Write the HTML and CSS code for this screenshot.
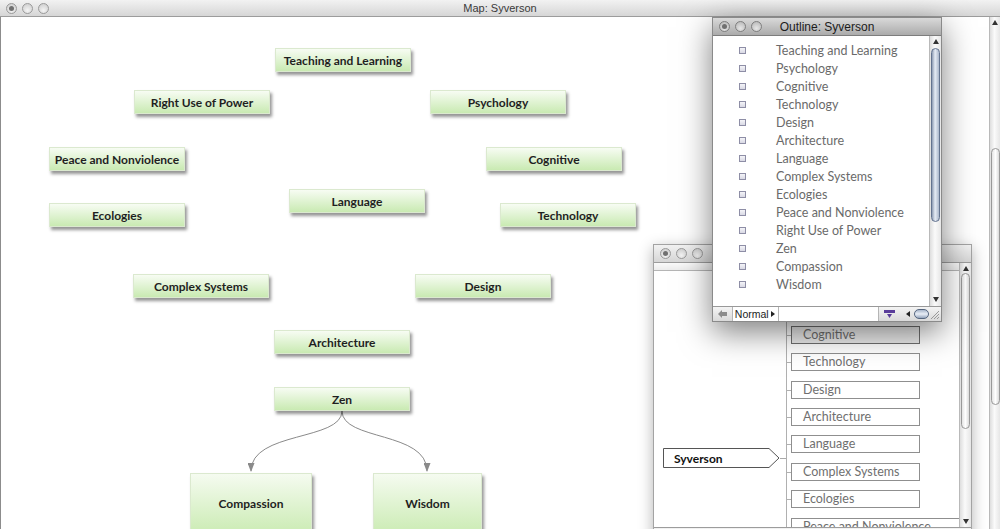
FILE: index.html
```html
<!DOCTYPE html>
<html lang="en">
<head>
    <meta charset="UTF-8">
    <title>Map: Syverson</title>
    <link rel="stylesheet" href="styles.css">
</head>
<body>
<div class="desktop">

    <!-- map window -->
    <div class="window map-window">
        <div class="titlebar">
            <div class="lights">
                <span class="light dirty"></span><span class="light"></span><span class="light"></span>
            </div>
            <div class="title">Map: Syverson</div>
            <div></div>
        </div>
        <div class="map-body">
            <div class="canvas">
                <svg class="links" width="700" height="512">
                    <defs>
                        <marker id="head" markerWidth="9" markerHeight="7" refX="8" refY="3.5" orient="auto" markerUnits="userSpaceOnUse">
                            <path class="head" d="M0,0 L9,3.5 L0,7 Z"/>
                        </marker>
                    </defs>
                    <path class="link" d="M341,394 C341,424 250,414 250,454" marker-end="url(#head)"/>
                    <path class="link" d="M341,394 C341,424 426,414 426,454" marker-end="url(#head)"/>
                </svg>
                <div class="node n-teaching">Teaching and Learning</div>
                <div class="node n-power">Right Use of Power</div>
                <div class="node n-psych">Psychology</div>
                <div class="node n-peace">Peace and Nonviolence</div>
                <div class="node n-cognitive">Cognitive</div>
                <div class="node n-language">Language</div>
                <div class="node n-ecologies">Ecologies</div>
                <div class="node n-technology">Technology</div>
                <div class="node n-complex">Complex Systems</div>
                <div class="node n-design">Design</div>
                <div class="node n-architecture">Architecture</div>
                <div class="node n-zen">Zen</div>
                <div class="node big n-compassion">Compassion</div>
                <div class="node big n-wisdom">Wisdom</div>
            </div>
            <div class="vscroll main-scroll">
                <span class="tri-up"></span>
                <div class="thumb"></div>
            </div>
        </div>
    </div>

    <!-- tree window (behind) -->
    <div class="window tree-window">
        <div class="titlebar">
            <div class="lights">
                <span class="light dirty"></span><span class="light"></span><span class="light"></span>
            </div>
            <div class="title"></div>
            <div></div>
        </div>
        <div class="tree-body">
            <div class="tree-main">
                <div class="ruler"></div>
                <div class="tree">
                    <div class="root">
                        <svg class="root-shape" width="117" height="20">
                            <polygon points="0.5,0.5 106,0.5 116,10 106,19.5 0.5,19.5" fill="#fff" stroke="#555"/>
                        </svg>
                        <span class="root-label">Syverson</span>
                    </div>
                    <div class="root-link"></div>
                    <div class="branch">
                        <div class="leaf hidden">Teaching and Learning</div>
                        <div class="leaf hidden">Psychology</div>
                        <div class="leaf selected">Cognitive</div>
                        <div class="leaf">Technology</div>
                        <div class="leaf">Design</div>
                        <div class="leaf">Architecture</div>
                        <div class="leaf">Language</div>
                        <div class="leaf">Complex Systems</div>
                        <div class="leaf">Ecologies</div>
                        <div class="leaf wide">Peace and Nonviolence</div>
                        <div class="leaf">Right Use of Power</div>
                        <div class="leaf">Zen</div>
                        <div class="leaf">Compassion</div>
                        <div class="leaf">Wisdom</div>
                    </div>
                </div>
            </div>
            <div class="vscroll tree-scroll">
                <span class="tri-up"></span>
                <div class="thumb"></div>
                <div class="spacer"></div>
                <span class="tri-down"></span>
            </div>
        </div>
        <div class="tree-foot"></div>
    </div>

    <!-- outline window (front) -->
    <div class="window outline-window">
        <div class="titlebar dark">
            <div class="lights">
                <span class="light dirty"></span><span class="light"></span><span class="light"></span>
            </div>
            <div class="title">Outline: Syverson</div>
            <div></div>
        </div>
        <div class="outline-body">
            <ul class="outline-list">
                <li><span class="bullet"></span>Teaching and Learning</li>
                <li><span class="bullet"></span>Psychology</li>
                <li><span class="bullet"></span>Cognitive</li>
                <li><span class="bullet"></span>Technology</li>
                <li><span class="bullet"></span>Design</li>
                <li><span class="bullet"></span>Architecture</li>
                <li><span class="bullet"></span>Language</li>
                <li><span class="bullet"></span>Complex Systems</li>
                <li><span class="bullet"></span>Ecologies</li>
                <li><span class="bullet"></span>Peace and Nonviolence</li>
                <li><span class="bullet"></span>Right Use of Power</li>
                <li><span class="bullet"></span>Zen</li>
                <li><span class="bullet"></span>Compassion</li>
                <li><span class="bullet"></span>Wisdom</li>
            </ul>
            <div class="vscroll outline-scroll">
                <span class="tri-up"></span>
                <div class="thumb aqua"></div>
                <div class="spacer"></div>
                <span class="tri-down"></span>
            </div>
        </div>
        <div class="outline-foot">
            <div class="foot-back">
                <svg width="9" height="8"><path d="M0,4 L4,0 L4,2 L9,2 L9,6 L4,6 L4,8 Z" fill="#8c8c8c"/></svg>
            </div>
            <div class="style-field"><span>Normal</span><span class="tri-right"></span></div>
            <div class="text-field"></div>
            <div class="foot-icon">
                <svg width="11" height="9"><rect x="0" y="0" width="11" height="3" fill="#5a3d9a"/><path d="M3,4 L8,4 L5.5,8 Z" fill="#5a3d9a"/></svg>
            </div>
            <span class="tri-left"></span>
            <div class="hthumb"></div>
            <div class="grip">
                <svg width="11" height="11"><path d="M10,2 L2,10 M10,5 L5,10 M10,8 L8,10" stroke="#999" stroke-width="1"/></svg>
            </div>
        </div>
    </div>

</div>
</body>
</html>
```

FILE: styles.css
```css
body {
    margin: 0;
    background: #fff;
    overflow: hidden;
}

.desktop {
    position: relative;
    width: 1000px;
    height: 529px;
    overflow: hidden;
    font-family: 'Liberation Sans', Arial, sans-serif;
}

.window {
    position: absolute;
    display: flex;
    flex-direction: column;
    background: #fff;
    box-sizing: border-box;
}

/* title bars */
.titlebar {
    display: grid;
    grid-template-columns: 1fr auto 1fr;
    align-items: center;
    height: 18px;
    box-sizing: border-box;
    border-bottom: 1px solid #9c9c9c;
    background: linear-gradient(#f2f2f2, #d6d6d6);
    flex-shrink: 0;
}

.titlebar.dark {
    background: linear-gradient(#d9d9d9, #ababab);
    border-bottom-color: #7d7d7d;
}

.lights {
    display: flex;
    gap: 5px;
    padding-left: 6px;
}

.light {
    width: 11px;
    height: 11px;
    box-sizing: border-box;
    border-radius: 50%;
    border: 1px solid #9a9a9a;
    background: radial-gradient(circle at 50% 70%, #f4f4f4, #c9c9c9);
    display: flex;
    align-items: center;
    justify-content: center;
}

.titlebar.dark .light {
    border-color: #7f7f7f;
    background: radial-gradient(circle at 50% 70%, #e6e6e6, #b3b3b3);
}

.light.dirty::after {
    content: "";
    width: 5px;
    height: 5px;
    border-radius: 50%;
    background: #707070;
}

.title {
    font-size: 11px;
    color: #3a3a3a;
    white-space: nowrap;
}

.titlebar.dark .title {
    font-size: 12px;
    color: #1c1c1c;
}

/* scroll bars */
.vscroll {
    width: 12px;
    flex-shrink: 0;
    box-sizing: border-box;
    border-left: 1px solid #b9b9b9;
    background: linear-gradient(to right, #dedede, #fafafa 45%, #e6e6e6);
    display: flex;
    flex-direction: column;
    align-items: center;
}

.vscroll .thumb {
    width: 9px;
    box-sizing: border-box;
    border: 1px solid #999;
    border-radius: 5px;
    background: linear-gradient(to right, #e4e4e4, #ffffff 50%, #dadada);
}

.vscroll .thumb.aqua {
    border-color: #63738f;
    background: linear-gradient(to right, #8d9bb3, #e6ecf5 45%, #aab6ca);
}

.vscroll .spacer {
    flex: 1;
}

.tri-up {
    width: 0;
    height: 0;
    border-left: 3px solid transparent;
    border-right: 3px solid transparent;
    border-bottom: 5px solid #333;
}

.tri-down {
    width: 0;
    height: 0;
    border-left: 3px solid transparent;
    border-right: 3px solid transparent;
    border-top: 5px solid #333;
}

.tri-right {
    width: 0;
    height: 0;
    border-top: 3px solid transparent;
    border-bottom: 3px solid transparent;
    border-left: 4px solid #222;
}

.tri-left {
    width: 0;
    height: 0;
    border-top: 3px solid transparent;
    border-bottom: 3px solid transparent;
    border-right: 4px solid #222;
}

/* map window */
.map-window {
    left: 0;
    top: 0;
    width: 1000px;
    height: 529px;
}

.map-window .titlebar {
    height: 17px;
}

.map-body {
    flex: 1;
    display: flex;
    min-height: 0;
}

.canvas {
    flex: 1;
    position: relative;
    overflow: hidden;
    border-left: 1px solid #8c8c8c;
}

.links {
    position: absolute;
    left: 0;
    top: 0;
}

.links .link {
    fill: none;
    stroke: #8a8a8a;
    stroke-width: 1;
}

.links .head {
    fill: #8a8a8a;
    stroke: none;
}

.main-scroll {
    width: 11px;
    padding-top: 3px;
}

.main-scroll .thumb {
    margin-top: 123px;
    height: 257px;
}

.node {
    position: absolute;
    width: 136px;
    height: 24px;
    box-sizing: border-box;
    display: flex;
    align-items: center;
    justify-content: center;
    font-family: Lato, 'Liberation Sans', sans-serif;
    font-weight: bold;
    font-size: 12px;
    color: #1f1f1f;
    background: linear-gradient(#f7fcf3, #c9eab2);
    border: 1px solid #dbe9cf;
    box-shadow: 2px 3px 3px rgba(0, 0, 0, 0.42);
    white-space: nowrap;
}

.node.big {
    height: 74px;
    align-items: flex-start;
    padding-top: 22px;
    background: linear-gradient(#f5fbf0, #cfedb9 75%);
}

.n-teaching     { left: 274px; top: 31px; }
.n-power        { left: 133px; top: 73px; }
.n-psych        { left: 429px; top: 73px; }
.n-peace        { left: 48px;  top: 130px; }
.n-cognitive    { left: 485px; top: 130px; }
.n-language     { left: 288px; top: 172px; }
.n-ecologies    { left: 48px;  top: 186px; }
.n-technology   { left: 499px; top: 186px; }
.n-complex      { left: 132px; top: 257px; }
.n-design       { left: 414px; top: 257px; }
.n-architecture { left: 273px; top: 313px; }
.n-zen          { left: 273px; top: 370px; }
.n-compassion   { left: 189px; top: 456px; width: 122px; }
.n-wisdom       { left: 372px; top: 456px; width: 109px; }

/* tree window */
.tree-window {
    left: 653px;
    top: 244px;
    width: 319px;
    height: 299px;
    border: 1px solid #a3a3a3;
    box-shadow: 0 4px 14px rgba(0, 0, 0, 0.3);
}

.tree-body {
    height: 264px;
    display: flex;
    flex-shrink: 0;
}

.tree-main {
    flex: 1;
    min-width: 0;
    overflow: hidden;
}

.ruler {
    height: 8px;
    box-sizing: border-box;
    border-bottom: 1px solid #b5b5b5;
    background: linear-gradient(#fafafa, #ececec);
}

.tree {
    display: flex;
    align-items: center;
    padding-left: 9px;
}

.root {
    position: relative;
    width: 117px;
    height: 20px;
    flex-shrink: 0;
    display: flex;
    align-items: center;
}

.root-shape {
    position: absolute;
    left: 0;
    top: 0;
}

.root-label {
    position: relative;
    padding-left: 11px;
    font-family: Lato, 'Liberation Sans', sans-serif;
    font-weight: bold;
    font-size: 12px;
    color: #111;
}

.root-link {
    width: 6px;
    height: 1px;
    background: #aaa;
    flex-shrink: 0;
}

.branch {
    border-left: 1px solid #b0b0b0;
    display: flex;
    flex-direction: column;
    gap: 9.4px;
    flex-shrink: 0;
}

.leaf {
    position: relative;
    margin-left: 4px;
    width: 129px;
    height: 18px;
    box-sizing: border-box;
    border: 1px solid #8f8f8f;
    padding-left: 11px;
    font-family: Lato, 'Liberation Sans', sans-serif;
    font-size: 12.5px;
    line-height: 15px;
    color: #6f6f6f;
    white-space: nowrap;
    background: #fff;
}

.leaf.hidden {
    visibility: hidden;
}

.leaf::before {
    content: "";
    position: absolute;
    left: -5px;
    top: 8px;
    width: 4px;
    height: 1px;
    background: #b0b0b0;
}

.leaf.selected {
    background: #ececec;
    border-color: #6f6f6f;
}

.leaf.wide {
    width: 200px;
}

.tree-scroll {
    padding: 3px 0 3px;
}

.tree-scroll .thumb {
    margin-top: 2px;
    height: 156px;
}

.tree-foot {
    height: 15px;
    border-top: 1px solid #9c9c9c;
    background: linear-gradient(#f2f2f2, #d8d8d8);
}

/* outline window */
.outline-window {
    left: 712px;
    top: 17px;
    width: 230px;
    height: 305px;
    border: 1px solid #8a8a8a;
    box-shadow: 0 10px 30px rgba(0, 0, 0, 0.5);
}

.outline-body {
    height: 270px;
    display: flex;
    flex-shrink: 0;
}

.outline-list {
    flex: 1;
    margin: 0;
    padding: 5px 0 0;
    list-style: none;
}

.outline-list li {
    display: flex;
    align-items: center;
    height: 18px;
    font-family: Lato, 'Liberation Sans', sans-serif;
    font-size: 12.5px;
    color: #6a6a6a;
    white-space: nowrap;
}

.bullet {
    width: 7px;
    height: 7px;
    box-sizing: border-box;
    margin-left: 26px;
    margin-right: 30px;
    border: 1px solid #8e8ea6;
    background: linear-gradient(#f4f4f8, #d9d9e4);
}

.outline-scroll {
    padding: 3px 0 4px;
}

.outline-scroll .thumb {
    margin-top: 4px;
    height: 174px;
}

.outline-foot {
    height: 15px;
    box-sizing: border-box;
    border-top: 1px solid #999;
    background: linear-gradient(#f4f4f4, #d9d9d9);
    display: flex;
    align-items: center;
    font-size: 10.5px;
    color: #222;
}

.foot-back {
    width: 19px;
    display: flex;
    justify-content: center;
}

.style-field {
    width: 48px;
    height: 14px;
    box-sizing: border-box;
    background: #fff;
    border-left: 1px solid #b5b5b5;
    border-right: 1px solid #b5b5b5;
    padding: 0 3px 0 2px;
    display: flex;
    align-items: center;
    justify-content: space-between;
}

.text-field {
    width: 100px;
    height: 14px;
    background: #fff;
    border-right: 1px solid #b5b5b5;
}

.foot-icon {
    width: 14px;
    margin: 0 4px 0 3px;
    display: flex;
    justify-content: center;
}

.outline-foot .tri-left {
    margin: 0 4px 0 6px;
}

.hthumb {
    width: 15px;
    height: 10px;
    box-sizing: border-box;
    border: 1px solid #55667f;
    border-radius: 5px;
    background: linear-gradient(#a8b6cb, #e9eef6 50%, #95a5bd);
}

.grip {
    flex: 1;
    display: flex;
    justify-content: flex-end;
    padding-right: 1px;
}
```
